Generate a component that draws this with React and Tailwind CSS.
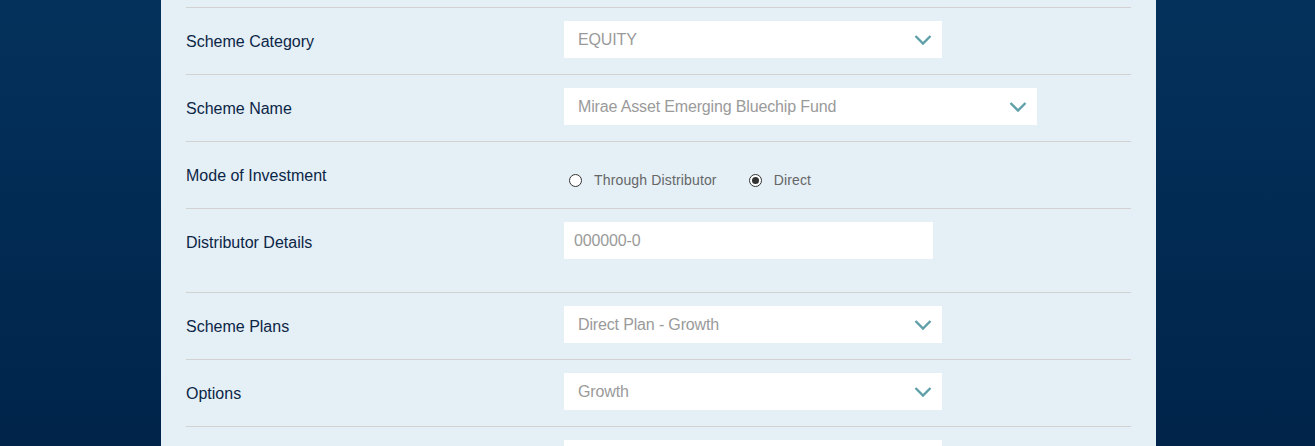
import { useState } from "react";

function Chevron() {
  return (
    <svg width="18" height="12" viewBox="0 0 18 12" className="shrink-0">
      <path d="M1.5 2 L9 9.5 L16.5 2" fill="none" stroke="#5f9fa9" strokeWidth="2.4" />
    </svg>
  );
}

function Select({ value, width }) {
  return (
    <div
      className={`flex h-[37px] items-center justify-between bg-white pl-[14px] pr-[10px] text-[16px] tracking-[-0.15px] text-[#9a9a9a] ${width}`}
    >
      <span>{value}</span>
      <Chevron />
    </div>
  );
}

function Radio({ label, checked, onClick }) {
  return (
    <button onClick={onClick} className="flex items-center gap-[12px] text-[14px] tracking-[0.15px] text-[#666]">
      <span className="flex h-[13px] w-[13px] items-center justify-center rounded-full border border-[#333] bg-white">
        {checked && <span className="h-[7px] w-[7px] rounded-full bg-[#333]" />}
      </span>
      <span>{label}</span>
    </button>
  );
}

function Row({ label, children, tall }) {
  return (
    <div
      className={`flex border-b border-[#d2d2d2] ${tall ? "h-[84px] items-start" : "h-[67px] items-center"}`}
    >
      <div className={`w-[378px] text-[16px] text-[#0c2646] ${tall ? "pt-[22px]" : "pt-[1px]"}`}>{label}</div>
      <div className={tall ? "pt-[13px]" : "mt-[-3px]"}>{children}</div>
    </div>
  );
}

export default function App() {
  const [mode, setMode] = useState("direct");

  return (
    <div
      className="flex h-[446px] overflow-hidden bg-gradient-to-b from-[#04315b] to-[#00244a] pl-[161px]"
      style={{ fontFamily: '"Liberation Sans", Arial, sans-serif' }}
    >
      <div className="w-[995px] bg-[#e4eff6] px-[25px]">
        <div className="h-[8px] border-b border-[#d2d2d2]" />

        <Row label="Scheme Category">
          <Select value="EQUITY" width="w-[378px]" />
        </Row>

        <Row label="Scheme Name">
          <Select value="Mirae Asset Emerging Bluechip Fund" width="w-[473px]" />
        </Row>

        <Row label="Mode of Investment">
          <div className="flex items-center gap-[32px] pl-[5px] pt-[14px]">
            <Radio label="Through Distributor" checked={mode === "dist"} onClick={() => setMode("dist")} />
            <Radio label="Direct" checked={mode === "direct"} onClick={() => setMode("direct")} />
          </div>
        </Row>

        <Row label="Distributor Details" tall>
          <input
            placeholder="000000-0"
            className="h-[37px] w-[369px] bg-white px-[10px] text-[16px] tracking-[-0.15px] text-[#333] outline-none placeholder:text-[#9a9a9a]"
          />
        </Row>

        <Row label="Scheme Plans">
          <Select value="Direct Plan - Growth" width="w-[378px]" />
        </Row>

        <Row label="Options">
          <Select value="Growth" width="w-[378px]" />
        </Row>

        <div className="flex pt-[13px]">
          <div className="w-[378px]" />
          <div className="h-[37px] w-[378px] bg-white" />
        </div>
      </div>
    </div>
  );
}
